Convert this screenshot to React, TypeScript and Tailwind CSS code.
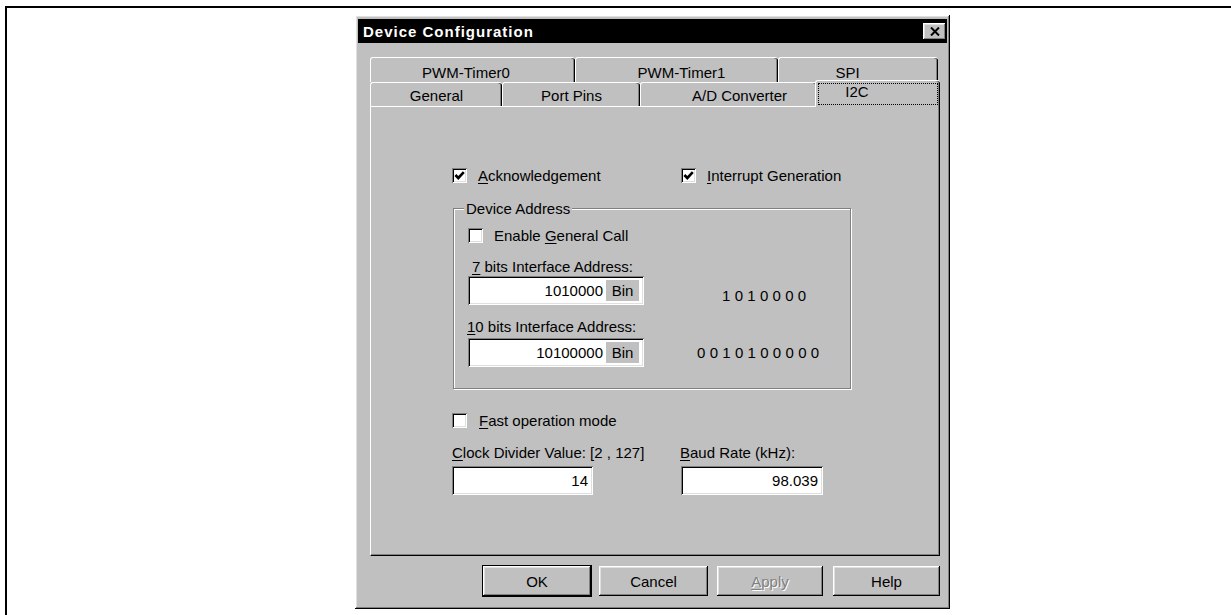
const raised =
  'shadow-[inset_-1px_-1px_#000,inset_1px_1px_#fff,inset_-2px_-2px_#808080,inset_2px_2px_#dfdfdf]';
const sunken =
  'shadow-[inset_1px_1px_#808080,inset_-1px_-1px_#fff,inset_2px_2px_#000,inset_-2px_-2px_#dfdfdf]';

const CheckBox = ({ checked }: { checked?: boolean }) => (
  <span className={`flex h-[15px] w-[15px] shrink-0 items-center justify-center bg-white ${sunken}`}>
    {checked && (
      <svg width="11" height="11" viewBox="0 0 11 11">
        <path d="M1.4 5 L4.3 8 L9.8 2.2" fill="none" stroke="#000" strokeWidth="2.6" />
      </svg>
    )}
  </span>
);

const Field = ({ value, className, bin }: { value: string; className: string; bin?: boolean }) => (
  <div className={`flex h-[29px] items-center bg-white pl-[4px] pr-[5px] ${sunken} ${className}`}>
    <span className="flex-1 text-right">{value}</span>
    {bin && (
      <span className="ml-[3px] flex h-[21px] w-[33px] items-center justify-center bg-[#c0c0c0]">Bin</span>
    )}
  </div>
);

const Tab = ({ label, className }: { label: string; className: string }) => (
  <div
    className={`flex h-full items-center justify-center rounded-t-[3px] border-l border-t border-white bg-[#c0c0c0] shadow-[inset_-1px_0_#000,inset_-2px_0_#808080] ${className}`}
  >
    {label}
  </div>
);

const Button = ({ children, className }: { children: React.ReactNode; className: string }) => (
  <div className={`flex h-[30px] items-center justify-center bg-[#c0c0c0] ${raised} ${className}`}>{children}</div>
);

export default function App() {
  return (
    <div className="h-[615px] w-[1231px] overflow-hidden bg-white font-['Liberation_Sans',Arial,sans-serif] text-[15px] leading-[17px] text-black">
      <div className="ml-[5px] mt-[6px] h-[620px] border-l-2 border-t-2 border-black pl-[348px] pt-[7px]">
        {/* dialog window */}
        <div className={`h-[594px] w-[595px] bg-[#c0c0c0] px-[3px] pt-[4px] ${raised}`}>
          <div className="flex h-[24px] items-center justify-between bg-black pl-[5px] pr-[1px]">
            <span className="font-bold tracking-[1px] text-white">Device Configuration</span>
            <div className={`flex h-[17px] w-[23px] items-center justify-center bg-[#c0c0c0] ${raised}`}>
              <svg width="10" height="9" viewBox="0 0 10 9">
                <path d="M1 0.5 L9 8.5 M9 0.5 L1 8.5" stroke="#000" strokeWidth="2" />
              </svg>
            </div>
          </div>

          <div className="ml-[12px] mt-[14px] w-[570px]">
            {/* back row of tabs */}
            <div className="flex h-[25px]">
              <Tab label="PWM-Timer0" className="w-[205px] pr-[14px] pt-[4px]" />
              <Tab label="PWM-Timer1" className="w-[203px] pl-[9px] pt-[4px]" />
              <Tab label="SPI" className="w-[160px] pr-[22px] pt-[4px]" />
            </div>
            {/* front row of tabs */}
            <div className="flex h-[24px] items-end">
              <Tab label="General" className="w-[132px] pt-[2px]" />
              <Tab label="Port Pins" className="w-[138px] pt-[2px]" />
              <Tab label="A/D Converter" className="w-[177px] pl-[21px] pt-[2px]" />
              <div className="relative z-10 -mb-px -ml-[2px] h-[27px] w-[125px] rounded-t-[3px] border-l border-t border-white bg-[#c0c0c0] px-[2px] pt-[2px] shadow-[inset_-1px_0_#000,inset_-2px_0_#808080]">
                <div className="flex h-[22px] items-center justify-center border border-dotted border-black pb-[6px] pr-[42px]">
                  I2C
                </div>
              </div>
            </div>

            {/* page */}
            <div className="h-[450px] border-b border-l border-r border-t border-b-black border-l-white border-r-black border-t-white pl-[81px] pt-[60px] shadow-[inset_-1px_-1px_#808080]">
              <div className="flex h-[17px] items-center">
                <div className="flex w-[229px] items-center gap-[11px]">
                  <CheckBox checked />
                  <span>
                    <u className="underline-offset-2">A</u>cknowledgement
                  </span>
                </div>
                <div className="flex items-center gap-[11px]">
                  <CheckBox checked />
                  <span>
                    <u className="underline-offset-2">I</u>nterrupt Generation
                  </span>
                </div>
              </div>

              {/* Device Address group */}
              <div className="ml-[1px] mt-[24px] h-[181px] w-[398px] border border-[#808080] pl-[14px] shadow-[1px_1px_0_#fff,inset_1px_1px_0_#fff]">
                <div className="-ml-[4px] -mt-[9px] w-fit bg-[#c0c0c0] px-[2px]">Device Address</div>
                <div className="mt-[10px] flex h-[17px] items-center gap-[11px]">
                  <CheckBox />
                  <span>
                    Enable <u className="underline-offset-2">G</u>eneral Call
                  </span>
                </div>
                <div className="ml-[4px] mt-[14px]">
                  <u className="underline-offset-2">7</u> bits Interface Address:
                </div>
                <div className="mt-px flex items-center">
                  <Field value="1010000" bin className="w-[176px]" />
                  <span className="ml-[78px] pt-[9px] tracking-[4.3px]">1010000</span>
                </div>
                <div className="-ml-px mt-[13px]">
                  <u className="underline-offset-2">1</u>0 bits Interface Address:
                </div>
                <div className="mt-[3px] flex items-center">
                  <Field value="10100000" bin className="w-[176px]" />
                  <span className="ml-[53px] tracking-[4.3px]">0010100000</span>
                </div>
              </div>

              <div className="mt-[23px] flex h-[17px] items-center gap-[12px]">
                <CheckBox />
                <span>
                  <u className="underline-offset-2">F</u>ast operation mode
                </span>
              </div>

              <div className="mt-[15px] flex">
                <div className="w-[228px]">
                  <div>
                    <u className="underline-offset-2">C</u>lock Divider Value: [2 , 127]
                  </div>
                  <Field value="14" className="mt-[5px] w-[141px]" />
                </div>
                <div>
                  <div>
                    <u className="underline-offset-2">B</u>aud Rate (kHz):
                  </div>
                  <Field value="98.039" className="ml-px mt-[5px] w-[142px]" />
                </div>
              </div>
            </div>

            {/* dialog buttons */}
            <div className="mt-[10px] flex">
              <Button className="ml-[113px] w-[108px] outline outline-1 outline-black">OK</Button>
              <Button className="ml-[8px] w-[109px]">Cancel</Button>
              <Button className="ml-[9px] w-[106px] text-[#808080] [text-shadow:1px_1px_0_#fff]">
                <span>
                  <u className="underline-offset-2">A</u>pply
                </span>
              </Button>
              <Button className="ml-[10px] w-[107px]">Help</Button>
            </div>
          </div>
        </div>
      </div>
    </div>
  );
}
